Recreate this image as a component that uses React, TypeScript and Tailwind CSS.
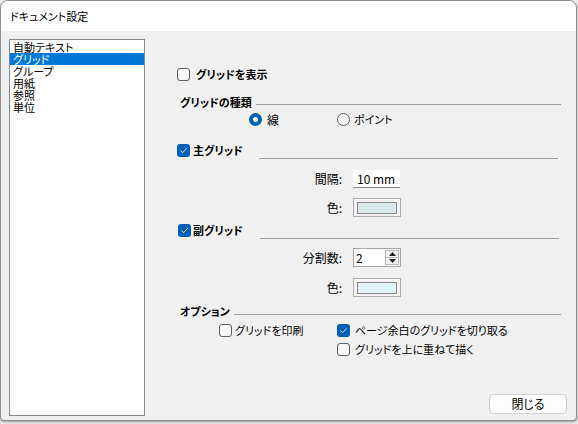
import React from "react";

const listItems = ["自動テキスト", "グリッド", "グループ", "用紙", "参照", "単位"];

function Check({ checked }: { checked?: boolean }) {
  if (checked) {
    return (
      <span className="flex h-[13px] w-[13px] shrink-0 items-center justify-center rounded-[3px] bg-[#005fb8]">
        <svg width="9" height="9" viewBox="0 0 9 9">
          <path d="M1.6 4.7 L3.7 6.7 L7.5 2.3" stroke="#d6e6f6" strokeWidth="1" fill="none" />
        </svg>
      </span>
    );
  }
  return <span className="h-[13px] w-[13px] shrink-0 rounded-[3px] border border-[#5e5e5e] bg-[#f8f8f8]" />;
}

function Radio({ selected }: { selected?: boolean }) {
  if (selected) {
    return (
      <span className="flex h-[13px] w-[13px] shrink-0 items-center justify-center rounded-full bg-[#005fb8]">
        <span className="h-[5px] w-[5px] rounded-full bg-white" />
      </span>
    );
  }
  return <span className="h-[13px] w-[13px] shrink-0 rounded-full border border-[#5e5e5e] bg-[#f8f8f8]" />;
}

function ColorButton({ fill }: { fill: string }) {
  return (
    <div className="flex h-[19px] w-[48px] items-center justify-center border border-[#adadad] bg-[#f4f4f4]">
      <div className={`h-[12px] w-[40px] border border-[#8c8c8c] ${fill}`} />
    </div>
  );
}

function Section({ label, lineClass }: { label: string; lineClass: string }) {
  return (
    <div className="ml-[35px] flex h-[14px] items-start">
      <span className="text-[11px] font-bold leading-[14px]">{label}</span>
      <div className={`ml-[4px] h-px flex-1 bg-[#a0a0a0] ${lineClass}`} />
    </div>
  );
}

export default function App() {
  return (
    <div className="h-[424px] w-[578px] bg-[#e8e8e8] text-[#000] [font-family:'Noto_Sans_CJK_JP',sans-serif] [font-feature-settings:'palt']">
      <div className="flex h-[421px] w-[577px] flex-col overflow-hidden rounded-t-[8px] rounded-b-[4px] border border-[#8e8e8e] bg-[#f0f0f0] shadow-[0_1px_2px_rgba(0,0,0,0.35)]">
        {/* Title bar */}
        <div className="flex h-[30px] shrink-0 items-center bg-white pl-[9px] text-[11px] leading-[12px]">
          ドキュメント設定
        </div>

        <div className="flex flex-1">
          {/* Category list */}
          <div className="ml-[8px] mt-[8px] h-[377px] w-[136px] shrink-0 border border-[#828790] bg-white pt-[1px]">
            {listItems.map((item) => (
              <div
                key={item}
                className={`flex h-[12px] items-center pl-[3px] text-[11px] leading-[12px] ${
                  item === "グリッド" ? "bg-[#0078d7] text-white" : ""
                }`}
              >
                {item}
              </div>
            ))}
          </div>

          {/* Settings panel */}
          <div className="flex flex-1 flex-col">
            <div className="ml-[32px] mt-[37px] flex h-[13px] items-center gap-[6px]">
              <Check />
              <span className="text-[11px] font-bold leading-[13px]">グリッドを表示</span>
            </div>

            <div className="mt-[14px]">
              <Section label="グリッドの種類" lineClass="mt-[9px] mr-[15px]" />
            </div>

            <div className="ml-[104px] mt-[4px] flex h-[13px] items-center">
              <div className="flex w-[88px] items-center gap-[5px]">
                <Radio selected />
                <span className="text-[12px] leading-[13px]">線</span>
              </div>
              <div className="flex items-center gap-[4px]">
                <Radio />
                <span className="text-[11px] leading-[13px]">ポイント</span>
              </div>
            </div>

            <div className="ml-[32px] mt-[18px] flex h-[15px] items-start">
              <Check checked />
              <span className="ml-[3px] text-[11px] font-bold leading-[13px]">主グリッド</span>
              <div className="ml-[16px] mr-[18px] mt-[14px] h-px flex-1 bg-[#a0a0a0]" />
            </div>

            <div className="mt-[11px] flex h-[18px] items-center">
              <span className="w-[197px] text-right text-[12px] leading-[12px]">間隔:</span>
              <div className="ml-[11px] flex h-[18px] w-[47px] items-center border-b border-[#8a8a8a] bg-white pl-[4px] text-[12px] leading-[12px]">
                10 mm
              </div>
            </div>

            <div className="mt-[10px] flex h-[19px] items-center">
              <span className="w-[197px] text-right text-[12px] leading-[12px]">色:</span>
              <div className="ml-[11px]">
                <ColorButton fill="bg-[#d9e8e8]" />
              </div>
            </div>

            <div className="ml-[33px] mt-[7px] flex h-[15px] items-start">
              <Check checked />
              <span className="ml-[2px] text-[11px] font-bold leading-[13px]">副グリッド</span>
              <div className="ml-[17px] mr-[17px] mt-[14px] h-px flex-1 bg-[#a0a0a0]" />
            </div>

            <div className="mt-[9px] flex h-[19px] items-center">
              <span className="w-[197px] text-right text-[12px] leading-[12px]">分割数:</span>
              <div className="ml-[11px] flex h-[19px] w-[48px] items-center border border-[#a5a5a5] bg-white">
                <span className="flex-1 pl-[2px] text-[12px] leading-[12px]">2</span>
                <div className="mr-[1px] flex h-[15px] w-[14px] flex-col border border-[#b8b8b8] bg-[#f0f0f0]">
                  <div className="flex flex-1 items-center justify-center border-b border-[#b8b8b8]">
                    <svg width="7" height="4" viewBox="0 0 7 4">
                      <path d="M0 4 L3.5 0 L7 4 Z" fill="#222" />
                    </svg>
                  </div>
                  <div className="flex flex-1 items-center justify-center">
                    <svg width="7" height="4" viewBox="0 0 7 4">
                      <path d="M0 0 L3.5 4 L7 0 Z" fill="#222" />
                    </svg>
                  </div>
                </div>
              </div>
            </div>

            <div className="mt-[11px] flex h-[19px] items-center">
              <span className="w-[197px] text-right text-[12px] leading-[12px]">色:</span>
              <div className="ml-[11px]">
                <ColorButton fill="bg-[#e3f4f8]" />
              </div>
            </div>

            <div className="mt-[7px]">
              <Section label="オプション" lineClass="mt-[10px] mr-[15px]" />
            </div>

            <div className="mt-[6px] flex h-[13px] items-center">
              <div className="ml-[74px] flex w-[118px] items-center gap-[3px]">
                <Check />
                <span className="text-[11px] leading-[13px]">グリッドを印刷</span>
              </div>
              <div className="flex items-center gap-[5px]">
                <Check checked />
                <span className="text-[11px] leading-[13px]">ページ余白のグリッドを切り取る</span>
              </div>
            </div>

            <div className="ml-[192px] mt-[6px] flex h-[13px] items-center gap-[5px]">
              <Check />
              <span className="text-[11px] leading-[13px]">グリッドを上に重ねて描く</span>
            </div>

            <div className="mr-[9px] mt-[38px] flex justify-end">
              <button className="flex h-[20px] w-[78px] items-center justify-center rounded-[4px] border border-[#d0d0d0] bg-[#fdfdfd] text-[12px] leading-[12px]">
                閉じる
              </button>
            </div>
          </div>
        </div>
      </div>
    </div>
  );
}
